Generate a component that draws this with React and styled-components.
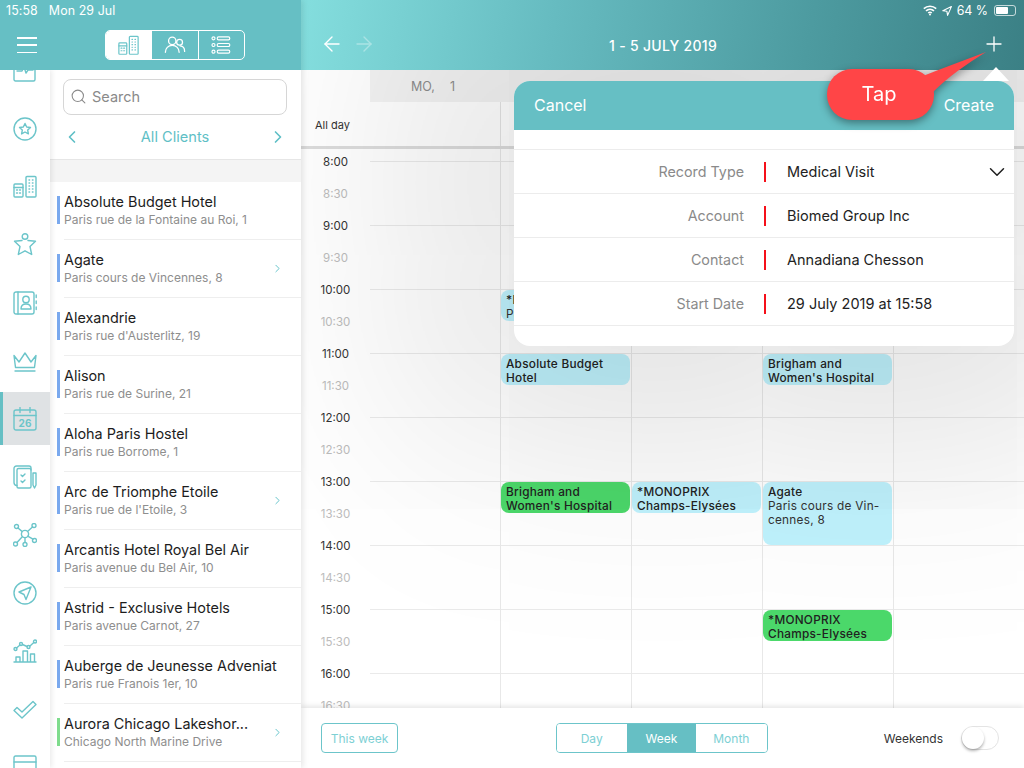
import React from 'react';
import styled, { createGlobalStyle } from 'styled-components';
import { ChevronLeft, ChevronRight, ChevronDown, Search as SearchGlyph, Plus, ArrowLeft, ArrowRight } from 'lucide-react';

const TEAL = '#66bfc4';
const ICON = '#6cc5ca';

const Global = createGlobalStyle`
  html, body { margin: 0; padding: 0; width: 1024px; height: 768px; overflow: hidden; background: #fff; }
  body { font-family: Inter, "Noto Sans", "Liberation Sans", sans-serif; color: #222; }
  * { box-sizing: border-box; }
`;

const Page = styled.div`
  position: relative;
  display: flex;
  width: 1024px;
  height: 768px;
  overflow: hidden;
`;

const LeftPane = styled.div`
  width: 301px;
  flex: none;
  display: flex;
  flex-direction: column;
  position: relative;
  z-index: 5;
  box-shadow: 2px 0 6px rgba(0, 0, 0, 0.1);
`;

const LeftHeader = styled.header`
  height: 70px;
  flex: none;
  background: ${TEAL};
  color: #fff;
  position: relative;
  z-index: 3;
  display: flex;
  flex-direction: column;
`;

const StatusLeft = styled.div`
  height: 21px;
  flex: none;
  display: flex;
  align-items: center;
  gap: 11px;
  padding-left: 6px;
  font-size: 12.4px;
  letter-spacing: 0.1px;
`;

const HeaderTools = styled.div`
  display: flex;
  align-items: center;
  padding: 9px 0 0 17px;
`;

const Burger = styled.div`
  width: 20px;
  height: 16px;
  display: flex;
  flex-direction: column;
  justify-content: space-between;
  margin-right: 68px;
  span { display: block; height: 1.5px; background: #fff; }
`;

const Segments = styled.div`
  display: flex;
  width: 140px;
  height: 30px;
  border: 1px solid #fff;
  border-radius: 5px;
  overflow: hidden;
`;

const Segment = styled.div`
  flex: 1;
  display: flex;
  align-items: center;
  justify-content: center;
  background: ${(p) => (p.$active ? '#fff' : 'transparent')};
  color: ${(p) => (p.$active ? ICON : '#fff')};
  & + & { border-left: 1px solid #fff; }
`;

const LeftBody = styled.div`
  flex: 1;
  min-height: 0;
  display: flex;
`;

const Sidebar = styled.nav`
  width: 50px;
  flex: none;
  height: 698px;
  overflow: hidden;
  background: #fff;
  position: relative;
  z-index: 2;
  box-shadow: 2px 0 5px rgba(0, 0, 0, 0.08);
  display: flex;
  flex-direction: column;
  color: ${ICON};
`;

const SideItem = styled.div`
  height: 58px;
  flex: none;
  display: flex;
  align-items: center;
  justify-content: center;
  background: ${(p) => (p.$active ? 'linear-gradient(#fff 2px, #dfe2e4 2px, #dfe2e4 55px, #fff 55px)' : 'none')};
  position: relative;
  ${(p) => p.$first && 'margin-top: -28px;'}
  ${(p) => p.$active && `
    &::before {
      content: '';
      position: absolute;
      left: 0; top: 2px; bottom: 3px;
      width: 3px;
      background: ${TEAL};
    }
  `}
`;

const ClientPane = styled.section`
  flex: 1;
  min-width: 0;
  height: 698px;
  overflow: hidden;
  background: #fff;
  display: flex;
  flex-direction: column;
`;

const SearchArea = styled.div`
  height: 90px;
  flex: none;
  padding: 9px 14px 0 13px;
  border-bottom: 1px solid #e6e6e6;
`;

const SearchBox = styled.div`
  height: 36px;
  border: 1.5px solid #d6d6d6;
  border-radius: 8px;
  display: flex;
  align-items: center;
  gap: 5px;
  padding: 0 0 2px 6px;
  color: #8a8a8a;
  font-size: 14.5px;
`;

const ClientNav = styled.div`
  display: flex;
  align-items: center;
  justify-content: space-between;
  height: 22px;
  margin: 11px -1px 0 -1px;
  color: #5fbfc6;
  font-size: 14.6px;
`;

const GreyBand = styled.div`
  height: 22px;
  flex: none;
  background: #f4f4f4;
`;

const ClientRow = styled.div`
  height: 58px;
  flex: none;
  position: relative;
  display: flex;
  align-items: center;
  padding-left: 14px;
  &::before {
    content: '';
    position: absolute;
    left: 7px;
    top: 14px;
    width: 3px;
    height: 28px;
    background: ${(p) => p.$bar};
  }
`;

const RowInner = styled.div`
  flex: 1;
  height: 58px;
  display: flex;
  align-items: center;
  justify-content: space-between;
  padding-right: 17px;
  border-bottom: 1px solid #eeeeee;
  color: #5cc0c7;
`;

const RowText = styled.div`
  display: flex;
  flex-direction: column;
  gap: 2px;
  padding-bottom: 1px;
`;

const RowTitle = styled.div`
  font-size: 14.4px;
  line-height: 17px;
  color: #1d1d1d;
`;

const RowSub = styled.div`
  font-size: 12px;
  line-height: 15px;
  color: #8e8e8e;
`;

const RightPane = styled.div`
  flex: 1;
  min-width: 0;
  display: flex;
  flex-direction: column;
  position: relative;
`;

const RightHeader = styled.header`
  height: 70px;
  flex: none;
  position: relative;
  z-index: 3;
  color: #fff;
  background: linear-gradient(100deg, #84dede 0%, #66bbc0 35%, #4d9ba0 70%, #3b8085 100%);
  display: flex;
  flex-direction: column;
`;

const StatusRight = styled.div`
  height: 21px;
  flex: none;
  display: flex;
  align-items: center;
  justify-content: flex-end;
  gap: 5px;
  padding-right: 8px;
  font-size: 12.4px;
`;

const Battery = styled.div`
  width: 22px;
  height: 11px;
  border: 1px solid rgba(255, 255, 255, 0.7);
  border-radius: 3px;
  padding: 1px;
  margin-left: 1px;
  span { display: block; height: 100%; background: #fff; border-radius: 1px; }
`;

const NavBar = styled.div`
  flex: 1;
  display: grid;
  grid-template-columns: 1fr auto 1fr;
  align-items: center;
  padding: 0 18px 3px 19px;
`;

const NavArrows = styled.div`
  display: flex;
  gap: 8px;
`;

const NavTitle = styled.div`
  font-size: 14px;
  font-weight: 500;
  letter-spacing: 0.3px;
  padding-top: 2px;
`;

const NavAdd = styled.div`
  justify-self: end;
  display: flex;
`;

const Calendar = styled.main`
  flex: 1;
  min-height: 0;
  position: relative;
  overflow: hidden;
  background: #fff;
  display: flex;
  flex-direction: column;
`;

const DayHead = styled.div`
  height: 32px;
  flex: none;
  margin-left: 69px;
  background: #f3f3f3;
  display: flex;
  align-items: center;
  padding-left: 41px;
  font-size: 12.5px;
  color: #8d8d8d;
  gap: 15px;
`;

const AllDay = styled.div`
  height: 47px;
  flex: none;
  display: grid;
  grid-template-columns: 69px 130px 131px 131px 131px 131px;
  border-bottom: 3px solid #dcdcdc;
`;

const AllDayLabel = styled.div`
  font-size: 11px;
  color: #333;
  padding: 16px 0 0 14px;
`;

const AllDayCell = styled.div`
  border-left: ${(p) => (p.$line ? '1px solid #e4e4e4' : 'none')};
`;

const TimeGrid = styled.div`
  flex: 1;
  min-height: 0;
  overflow: hidden;
  display: grid;
  grid-template-columns: 69px 130px 131px 131px 131px 131px;
  grid-template-rows: 12px repeat(18, 32px);
`;

const TimeLabel = styled.div`
  grid-column: 1;
  grid-row: ${(p) => p.$row};
  transform: translateY(-7px);
  height: 16px;
  line-height: 16px;
  text-align: center;
  font-size: 11.5px;
  color: ${(p) => (p.$major ? '#333' : '#bcbcbc')};
  z-index: 1;
`;

const HourLine = styled.div`
  grid-column: 2 / -1;
  grid-row: ${(p) => p.$row} / span 2;
  border-top: 1.5px solid #eaeaea;
`;

const DayLine = styled.div`
  grid-column: ${(p) => p.$col};
  grid-row: 1 / -1;
  border-left: 1px solid #e8e8e8;
`;

const Event = styled.div`
  grid-column: ${(p) => p.$col};
  grid-row: ${(p) => p.$row} / span ${(p) => p.$span};
  margin: 1px 1px 0 1px;
  background: ${(p) => p.$color};
  border-radius: 8px;
  padding: 3px 5px 0 5px;
  font-size: 11.8px;
  line-height: 14px;
  font-weight: 500;
  letter-spacing: 0.25px;
  color: #222;
  overflow: hidden;
  z-index: 1;
`;

const EventSub = styled.span`
  font-weight: 400;
  color: #333;
`;

const Modal = styled.div`
  position: absolute;
  left: 213px;
  top: 11px;
  width: 500px;
  height: 265px;
  border-radius: 16px;
  background: #fff;
  z-index: 2;
  box-shadow: 0 0 220px 104px rgba(0, 0, 0, 0.115);
  overflow: hidden;
`;

const ModalHeader = styled.div`
  height: 49px;
  background: ${TEAL};
  color: #fff;
  font-size: 16px;
  display: flex;
  align-items: center;
  justify-content: space-between;
  padding: 0 20px 2px;
`;

const ModalBody = styled.div`
  padding-top: 19px;
`;

const Field = styled.div`
  height: 44px;
  display: grid;
  grid-template-columns: 230px 43px 1fr 30px;
  align-items: center;
  border-top: 1.5px solid #ececec;
  &:last-child { border-bottom: 1.5px solid #ececec; height: 45px; }
`;

const FieldLabel = styled.div`
  font-size: 14.3px;
  color: #8a8a8a;
  text-align: right;
  padding-bottom: 1px;
`;

const RedBar = styled.div`
  width: 2px;
  height: 20px;
  background: #f5101a;
  justify-self: center;
  margin-left: -1px;
`;

const FieldValue = styled.div`
  font-size: 14.5px;
  color: #222;
  padding-bottom: 1px;
`;

const PopArrow = styled.div`
  position: absolute;
  right: 15px;
  top: 67px;
  width: 0;
  height: 0;
  border-left: 13px solid transparent;
  border-right: 13px solid transparent;
  border-bottom: 14px solid #fff;
  z-index: 4;
`;

const Callout = styled.div`
  position: absolute;
  left: 526px;
  top: 50px;
  width: 170px;
  height: 75px;
  z-index: 6;
  filter: drop-shadow(0 3px 4px rgba(0, 0, 0, 0.4));
`;

const CalloutPill = styled.div`
  position: absolute;
  left: 0;
  top: 19px;
  width: 107px;
  height: 51px;
  border-radius: 25px;
  background: #ff4547;
  color: #fff;
  font-size: 20px;
  display: flex;
  align-items: center;
  justify-content: center;
  padding: 0 3px 2px 0;
`;

const CalloutTail = styled.svg`
  position: absolute;
  left: 90px;
  top: 0;
`;

const Footer = styled.footer`
  height: 60px;
  flex: none;
  background: #fff;
  position: relative;
  z-index: 3;
  box-shadow: 0 -2px 5px rgba(0, 0, 0, 0.1);
  display: grid;
  grid-template-columns: 1fr auto 1fr;
  align-items: center;
  padding: 0 21px 0 19px;
`;

const WeekButton = styled.div`
  justify-self: start;
  width: 77px;
  height: 30px;
  margin-left: 1px;
  border: 1.5px solid #6cc5ca;
  border-radius: 4px;
  color: #7dd0d4;
  font-size: 12px;
  display: flex;
  align-items: center;
  justify-content: center;
`;

const Range = styled.div`
  display: flex;
  width: 212px;
  height: 30px;
  border: 1.5px solid #6cc5ca;
  border-radius: 4px;
  overflow: hidden;
`;

const RangeItem = styled.div`
  flex: ${(p) => p.$grow};
  display: flex;
  align-items: center;
  justify-content: center;
  font-size: 12px;
  color: ${(p) => (p.$active ? '#fff' : '#7dd0d4')};
  background: ${(p) => (p.$active ? TEAL : '#fff')};
`;

const Weekends = styled.div`
  justify-self: end;
  display: flex;
  align-items: center;
  gap: 18px;
  margin-right: 4px;
  font-size: 12px;
  color: #333;
`;

const Toggle = styled.div`
  width: 38px;
  height: 24px;
  border-radius: 12px;
  border: 1px solid #e4e4e4;
  position: relative;
  &::after {
    content: '';
    position: absolute;
    left: 0;
    top: 0;
    width: 22px;
    height: 22px;
    border-radius: 50%;
    background: #fff;
    box-shadow: 0 2px 3px rgba(0, 0, 0, 0.3);
  }
`;

const Svg = ({ children, size = 24, sw = 1.4 }) => (
  <svg width={size} height={size} viewBox="0 0 24 24" fill="none" stroke="currentColor" strokeWidth={sw} strokeLinecap="round" strokeLinejoin="round">
    {children}
  </svg>
);

const BuildingsIcon = ({ size }) => (
  <Svg size={size}>
    <rect x="1" y="9" width="9" height="13" rx="1" />
    <path d="M1 12.5h9M3.5 15h1M6.5 15h1M3.5 18h1M6.5 18h1" />
    <rect x="13" y="1.5" width="10" height="20.5" rx="1" />
    <path d="M16 5h.6M19.4 5h.6M16 8h.6M19.4 8h.6M16 11h.6M19.4 11h.6M16 14h.6M19.4 14h.6M16 17h.6M19.4 17h.6" />
  </Svg>
);
const PeopleIcon = () => (
  <Svg size={22}>
    <circle cx="9" cy="7.5" r="4" />
    <circle cx="17" cy="9" r="3.2" />
    <path d="M1.5 20c0-4.5 3-7.5 7.5-7.5s7.5 3 7.5 7.500M17.500 13c3 .2 5 2.500 5 6" />
  </Svg>
);
const ListIcon = () => (
  <Svg size={20}>
    <circle cx="3" cy="4" r="1.8" /><rect x="7.5" y="2.2" width="15" height="3.6" rx="1.6" />
    <circle cx="3" cy="12" r="1.8" /><rect x="7.5" y="10.2" width="15" height="3.6" rx="1.6" />
    <circle cx="3" cy="20" r="1.8" /><rect x="7.5" y="18.2" width="15" height="3.6" rx="1.6" />
  </Svg>
);
const PulseIcon = () => (
  <Svg><rect x="1" y="1" width="21" height="21" rx="1.5" /><path d="M4 12h5l2-4 2 6 2-3h5" /></Svg>
);
const StarCircleIcon = () => (
  <Svg><circle cx="12" cy="12" r="11" /><path d="m12 6.500 1.700 3.500 3.800.5-2.800 2.600.7 3.800-3.400-1.900-3.400 1.900.7-3.800-2.800-2.600 3.800-.5z" /></Svg>
);
const PersonStarIcon = () => (
  <Svg><circle cx="12" cy="3.500" r="2.800" /><path d="M9 7.500 1.500 8.300 7 13.500l-1.700 8L12 17.800l6.700 3.700L17 13.500l5.500-5.200L15 7.500" /></Svg>
);
const ContactIcon = () => (
  <Svg>
    <rect x="1" y="1" width="20" height="22" rx="2" /><path d="M5 1v22" />
    <circle cx="13" cy="8.500" r="3.200" /><path d="M8 18c0-3.500 2-5 5-5s5 1.500 5 5z" />
    <path d="M23.200 4v2.500M23.200 10v2.500M23.200 16v2.500" />
  </Svg>
);
const CrownIcon = () => (
  <Svg><path d="M1 6.500 6 13l6-9 6 9 5-6.500-1.500 12H2.500z" /><path d="M2 22h20" /></Svg>
);
const CalendarIcon = () => (
  <Svg>
    <rect x="1" y="3" width="22" height="20" rx="2" /><path d="M1 8.500h22M7 .5v5M17 .5v5" />
    <text x="12" y="20" textAnchor="middle" fontSize="10" fontWeight="700" fill="currentColor" stroke="none" fontFamily="Inter, sans-serif">26</text>
  </Svg>
);
const ClipboardIcon = () => (
  <Svg>
    <path d="M4 20.500c-2 0-3-1-3-3V3.500C1 2 2 1 3.500 1H16c1.500 0 2 1 2 2v2" />
    <rect x="4" y="3.500" width="14" height="19.500" rx="1.500" />
    <path d="m8 10 1.500 1.500 2.500-2.500M8 16l1.500 1.500 2.500-2.500" />
    <path d="M20.500 8v12l1.500 3 1.500-3V8z" transform="translate(-.5)" />
  </Svg>
);
const NetworkIcon = () => (
  <Svg>
    <circle cx="12" cy="11" r="3.600" /><circle cx="3.500" cy="3.500" r="2" /><circle cx="21" cy="2.500" r="2" />
    <circle cx="2.500" cy="21" r="2" /><circle cx="12" cy="21.500" r="2" /><circle cx="21.500" cy="17.500" r="2" />
    <path d="m5 5 4.300 3.600M19.500 4l-5 4.500M4 19.500l5.500-6M12 14.600v5M20 16.200l-5.300-3" />
  </Svg>
);
const SendIcon = () => (
  <Svg><circle cx="12" cy="12" r="11" /><path d="M18 6 6 11l5 2.500 2 5z" /></Svg>
);
const ChartIcon = () => (
  <Svg>
    <path d="M1 23h22M3 23v-5h4v5M10 23V12h4.500v11M17.500 23v-8h4v8" />
    <circle cx="2.500" cy="10" r="1.500" /><circle cx="8" cy="5" r="1.500" /><circle cx="15.500" cy="8" r="1.500" /><circle cx="22" cy="2.500" r="1.500" />
    <path d="m3.500 9 3.500-3M9.500 5.500l4.500 2M17 7l3.800-3.500" />
  </Svg>
);
const CheckIcon = () => (
  <Svg><path d="M1 13.500 4 10.500 9 15 20 4.500 23 7.500 9 21z" /></Svg>
);
const WindowIcon = () => (
  <Svg><rect x="1" y="1" width="22" height="22" rx="1.500" /><path d="M1 7h22" /></Svg>
);
const WifiIcon = () => (
  <svg width="14" height="11" viewBox="0 0 14 11" fill="none" stroke="currentColor" strokeWidth="1.6">
    <path d="M.8 3.600c3.500-3.200 8.900-3.200 12.400 0M3 5.900c2.300-2 5.700-2 8 0M5.200 8c1-.8 2.600-.8 3.600 0" />
    <circle cx="7" cy="9.600" r="1" fill="currentColor" stroke="none" />
  </svg>
);
const LocationIcon = () => (
  <svg width="10" height="10" viewBox="0 0 10 10" fill="none" stroke="currentColor" strokeWidth="1.100" strokeLinejoin="round">
    <path d="M9.400.6 .8 4.700l4.100.6.700 4.100z" />
  </svg>
);

const sideIcons = [PulseIcon, StarCircleIcon, BuildingsIcon, PersonStarIcon, ContactIcon, CrownIcon, CalendarIcon, ClipboardIcon, NetworkIcon, SendIcon, ChartIcon, CheckIcon, WindowIcon];

const BLUE = '#7aa9ee';
const GREEN = '#7fdc8d';
const clients = [
  ['Absolute Budget Hotel', 'Paris rue de la Fontaine au Roi, 1', BLUE, false],
  ['Agate', 'Paris cours de Vincennes, 8', BLUE, true],
  ['Alexandrie', "Paris rue d'Austerlitz, 19", BLUE, false],
  ['Alison', 'Paris rue de Surine, 21', BLUE, false],
  ['Aloha Paris Hostel', 'Paris rue Borrome, 1', BLUE, false],
  ['Arc de Triomphe Etoile', "Paris rue de l'Etoile, 3", BLUE, true],
  ['Arcantis Hotel Royal Bel Air', 'Paris avenue du Bel Air, 10', BLUE, false],
  ['Astrid - Exclusive Hotels', 'Paris avenue Carnot, 27', BLUE, false],
  ['Auberge de Jeunesse Adveniat', 'Paris rue Franois 1er, 10', BLUE, false],
  ['Aurora Chicago Lakeshor...', 'Chicago North Marine Drive', GREEN, true],
];

const times = ['8:00', '8:30', '9:00', '9:30', '10:00', '10:30', '11:00', '11:30', '12:00', '12:30', '13:00', '13:30', '14:00', '14:30', '15:00', '15:30', '16:00', '16:30'];

const LIGHT = '#bff2fd';
const EVGREEN = '#4cd96b';
const events = [
  { col: 3, row: 6, span: 1, color: LIGHT, title: '*MONOPRIX', sub: 'Paris' },
  { col: 3, row: 8, span: 1, color: LIGHT, title: 'Absolute Budget Hotel' },
  { col: 5, row: 8, span: 1, color: LIGHT, title: "Brigham and Women's Hospital" },
  { col: 3, row: 12, span: 1, color: EVGREEN, title: "Brigham and Women's Hospital" },
  { col: 4, row: 12, span: 1, color: LIGHT, title: '*MONOPRIX Champs-Elysées' },
  { col: 5, row: 12, span: 2, color: LIGHT, title: 'Agate', sub: 'Paris cours de Vin- cennes, 8' },
  { col: 5, row: 16, span: 1, color: EVGREEN, title: '*MONOPRIX Champs-Elysées' },
];
const fields = [
  ['Record Type', 'Medical Visit', true],
  ['Account', 'Biomed Group Inc', false],
  ['Contact', 'Annadiana Chesson', false],
  ['Start Date', '29 July 2019 at 15:58', false],
];

export default function App() {
  return (
    <Page>
      <Global />
      <LeftPane>
        <LeftHeader>
          <StatusLeft><span>15:58</span><span>Mon 29 Jul</span></StatusLeft>
          <HeaderTools>
            <Burger><span /><span /><span /></Burger>
            <Segments>
              <Segment $active><BuildingsIcon size={21} /></Segment>
              <Segment><PeopleIcon /></Segment>
              <Segment><ListIcon /></Segment>
            </Segments>
          </HeaderTools>
        </LeftHeader>
        <LeftBody>
          <Sidebar>
            {sideIcons.map((Icon, i) => (
              <SideItem key={i} $first={i === 0} $active={i === 6}><Icon /></SideItem>
            ))}
          </Sidebar>
          <ClientPane>
            <SearchArea>
              <SearchBox><SearchGlyph size={17} strokeWidth={1.5} />Search</SearchBox>
              <ClientNav>
                <ChevronLeft size={20} strokeWidth={2} />
                <span>All Clients</span>
                <ChevronRight size={20} strokeWidth={2} />
              </ClientNav>
            </SearchArea>
            <GreyBand />
            {clients.map(([title, sub, bar, more]) => (
              <ClientRow key={title} $bar={bar}>
                <RowInner>
                  <RowText>
                    <RowTitle>{title}</RowTitle>
                    <RowSub>{sub}</RowSub>
                  </RowText>
                  {more && <ChevronRight size={13} strokeWidth={1.7} />}
                </RowInner>
              </ClientRow>
            ))}
          </ClientPane>
        </LeftBody>
      </LeftPane>
      <RightPane>
        <RightHeader>
          <StatusRight>
            <WifiIcon /><LocationIcon /><span>64 %</span><Battery><span style={{ width: '64%' }} /></Battery>
          </StatusRight>
          <NavBar>
            <NavArrows>
              <ArrowLeft size={24} strokeWidth={1.4} />
              <ArrowRight size={24} strokeWidth={1.4} opacity={0.35} />
            </NavArrows>
            <NavTitle>1 - 5 JULY 2019</NavTitle>
            <NavAdd><Plus size={24} strokeWidth={1.3} /></NavAdd>
          </NavBar>
        </RightHeader>
        <PopArrow />
        <Calendar>
          <DayHead><span>MO,</span><span>1</span></DayHead>
          <AllDay>
            <AllDayLabel>All day</AllDayLabel>
            <AllDayCell />
            <AllDayCell $line /><AllDayCell $line /><AllDayCell $line /><AllDayCell $line />
          </AllDay>
          <TimeGrid>
            {times.map((t, i) => (
              <React.Fragment key={t}>
                <TimeLabel $row={i + 2} $major={i % 2 === 0}>{t}</TimeLabel>
                {i % 2 === 0 && <HourLine $row={i + 2} />}
              </React.Fragment>
            ))}
            {[3, 4, 5, 6].map((c) => <DayLine key={c} $col={c} />)}
            {events.map((e, i) => (
              <Event key={i} $col={e.col} $row={e.row} $span={e.span} $color={e.color}>
                {e.title}
                {e.sub && <><br /><EventSub>{e.sub}</EventSub></>}
              </Event>
            ))}
          </TimeGrid>
          <Modal>
            <ModalHeader><span>Cancel</span><span>Create</span></ModalHeader>
            <ModalBody>
              {fields.map(([label, value, select]) => (
                <Field key={label}>
                  <FieldLabel>{label}</FieldLabel>
                  <RedBar />
                  <FieldValue>{value}</FieldValue>
                  {select ? <ChevronDown size={26} strokeWidth={1.4} /> : <span />}
                </Field>
              ))}
            </ModalBody>
          </Modal>
        </Calendar>
        <Footer>
          <WeekButton>This week</WeekButton>
          <Range>
            <RangeItem $grow={71}>Day</RangeItem>
            <RangeItem $grow={70} $active>Week</RangeItem>
            <RangeItem $grow={71}>Month</RangeItem>
          </Range>
          <Weekends>Weekends<Toggle /></Weekends>
        </Footer>
        <Callout>
          <CalloutTail width="72" height="45" viewBox="0 0 72 45">
            <path d="M6 26 C26 18 48 10 69 2 C50 14 32 26 16 42 Z" fill="#ff4547" />
          </CalloutTail>
          <CalloutPill>Tap</CalloutPill>
        </Callout>
      </RightPane>
    </Page>
  );
}
